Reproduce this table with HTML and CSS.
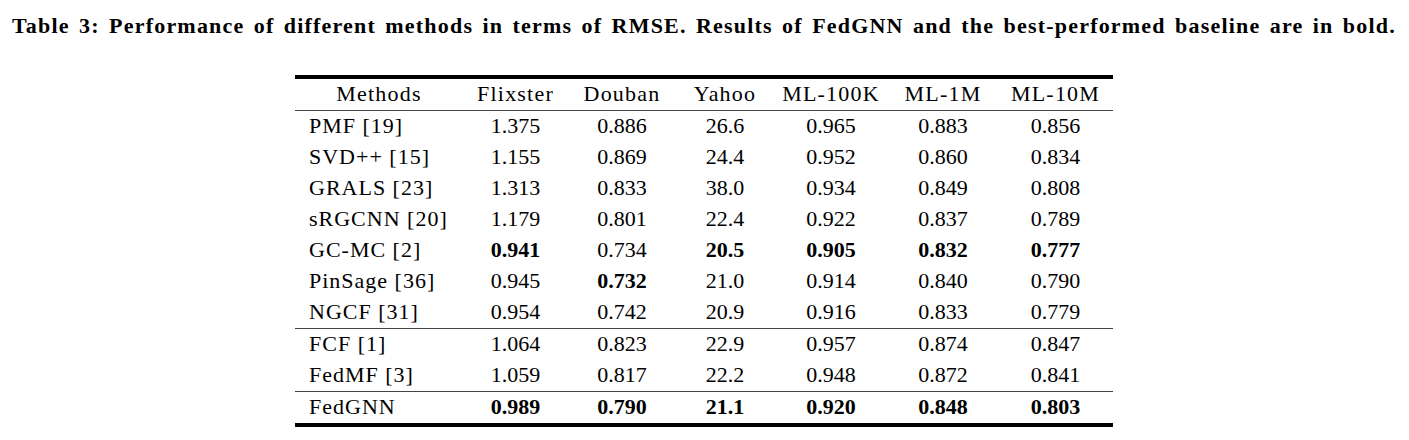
FILE: index.html
```html
<!DOCTYPE html>
<html>
<head>
<meta charset="utf-8">
<link rel="stylesheet" href="styles.css">
</head>
<body>
<p class="caption">Table 3: Performance of different methods in terms of RMSE. Results of FedGNN and the best-performed baseline are in bold.</p>
<table class="results">
  <colgroup>
    <col class="c-method"><col class="c-flix"><col class="c-douban"><col class="c-yahoo"><col class="c-ml100k"><col class="c-ml1m"><col class="c-ml10m">
  </colgroup>
  <thead>
    <tr><th>Methods</th><th>Flixster</th><th>Douban</th><th>Yahoo</th><th>ML-100K</th><th>ML-1M</th><th>ML-10M</th></tr>
  </thead>
  <tbody>
    <tr><td>PMF [19]</td><td>1.375</td><td>0.886</td><td>26.6</td><td>0.965</td><td>0.883</td><td>0.856</td></tr>
    <tr><td>SVD++ [15]</td><td>1.155</td><td>0.869</td><td>24.4</td><td>0.952</td><td>0.860</td><td>0.834</td></tr>
    <tr><td>GRALS [23]</td><td>1.313</td><td>0.833</td><td>38.0</td><td>0.934</td><td>0.849</td><td>0.808</td></tr>
    <tr><td>sRGCNN [20]</td><td>1.179</td><td>0.801</td><td>22.4</td><td>0.922</td><td>0.837</td><td>0.789</td></tr>
    <tr><td>GC-MC [2]</td><td class="b">0.941</td><td>0.734</td><td class="b">20.5</td><td class="b">0.905</td><td class="b">0.832</td><td class="b">0.777</td></tr>
    <tr><td>PinSage [36]</td><td>0.945</td><td class="b">0.732</td><td>21.0</td><td>0.914</td><td>0.840</td><td>0.790</td></tr>
    <tr><td>NGCF [31]</td><td>0.954</td><td>0.742</td><td>20.9</td><td>0.916</td><td>0.833</td><td>0.779</td></tr>
  </tbody>
  <tbody>
    <tr><td>FCF [1]</td><td>1.064</td><td>0.823</td><td>22.9</td><td>0.957</td><td>0.874</td><td>0.847</td></tr>
    <tr><td>FedMF [3]</td><td>1.059</td><td>0.817</td><td>22.2</td><td>0.948</td><td>0.872</td><td>0.841</td></tr>
  </tbody>
  <tbody>
    <tr><td>FedGNN</td><td class="b">0.989</td><td class="b">0.790</td><td class="b">21.1</td><td class="b">0.920</td><td class="b">0.848</td><td class="b">0.803</td></tr>
  </tbody>
</table>
</body>
</html>
```
FILE: styles.css
```css
html, body {
  margin: 0;
  padding: 0;
  background: #fff;
}
body {
  font-family: "Liberation Serif", "DejaVu Serif", serif;
  color: #000;
}
.caption {
  margin: 0;
  padding: 14px 0 0 12px;
  font-size: 22px;
  line-height: 24px;
  font-weight: bold;
  letter-spacing: 1.2px;
  word-spacing: 2.6px;
  white-space: nowrap;
}
.results {
  margin: 37px 0 0 295px;
  border-collapse: collapse;
  table-layout: fixed;
  width: 818px;
  font-size: 22px;
  border-top: 4px solid #000;
  border-bottom: 4px solid #000;
}
.c-method { width: 168px; }
.c-flix { width: 105px; }
.c-douban { width: 108px; }
.c-yahoo { width: 98px; }
.c-ml100k { width: 114px; }
.c-ml1m { width: 110px; }
.c-ml10m { width: 115px; }
.results th,
.results td {
  padding: 0 0 2px 0;
  line-height: 29px;
  text-align: center;
  font-weight: normal;
  white-space: nowrap;
}
.results th {
  letter-spacing: 1.2px;
}
.results thead tr {
  border-bottom: 1px solid #444;
}
.results tbody + tbody {
  border-top: 1px solid #444;
}
.results td:first-child {
  text-align: left;
  padding-left: 14px;
  letter-spacing: 1px;
}
.results td.b {
  font-weight: bold;
}
```
